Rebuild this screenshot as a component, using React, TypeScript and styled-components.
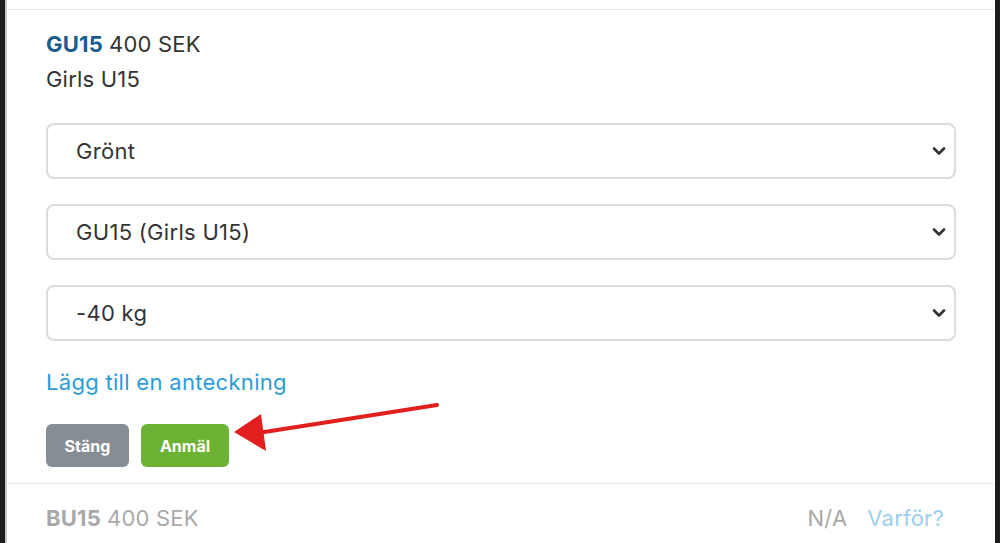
import React from "react";
import styled, { createGlobalStyle } from "styled-components";

const Global = createGlobalStyle`
  html, body { margin: 0; padding: 0; background: #1c1c1c; }
  body { font-family: "Inter", "Open Sans", "Liberation Sans", sans-serif; }
  * { box-sizing: border-box; }
`;

const Frame = styled.div`
  position: relative;
  margin-left: 5px;
  width: 990px;
  height: 543px;
  background: #fff;
  border-left: 2px solid #c8c8c8;
  overflow: hidden;
`;

const Item = styled.div<{ $muted?: boolean }>`
  margin: 0 0 0 1px;
  width: 986px;
  border-top: 1px solid #e8e8e8;
  padding: ${(p) => (p.$muted ? "17px 38px" : "17px 38px 16px 38px")};
`;

const Spacer = styled.div`
  height: 9px;
`;

const TitleLine = styled.div<{ $muted?: boolean }>`
  font-size: 22px;
  letter-spacing: 0.2px;
  line-height: 35px;
  color: ${(p) => (p.$muted ? "#a9a9a9" : "#333")};
  display: flex;
  align-items: center;
`;

const Code = styled.span<{ $muted?: boolean }>`
  font-weight: 700;
  color: ${(p) => (p.$muted ? "#a9a9a9" : "#1b5d8c")};
  margin-right: 6px;
`;

const Sub = styled.div`
  font-size: 22px;
  letter-spacing: 0.2px;
  line-height: 35px;
  color: #333;
`;

const Fields = styled.div`
  display: flex;
  flex-direction: column;
  gap: 25px;
  margin-top: 26px;
`;

const SelectBox = styled.div`
  position: relative;
  height: 56px;
  border: 2px solid #dcdcdc;
  border-radius: 8px;
  display: flex;
  align-items: center;
  padding-left: 28px;
  font-size: 22px;
  letter-spacing: 0.3px;
  color: #333;
`;

const Chevron = styled.svg`
  position: absolute;
  right: 8px;
  top: 50%;
  margin-top: -6px;
`;

const Link = styled.a`
  display: block;
  margin-top: 26px;
  font-size: 22px;
  letter-spacing: 0.3px;
  line-height: 30px;
  color: #2a9cd8;
  text-decoration: none;
`;

const Buttons = styled.div`
  display: flex;
  gap: 12px;
  margin-top: 27px;
`;

const Button = styled.button<{ $variant: "gray" | "green" }>`
  height: 43px;
  width: ${(p) => (p.$variant === "gray" ? "83px" : "88px")};
  padding: 0;
  border: none;
  border-radius: 6px;
  font-family: inherit;
  font-size: 16px;
  font-weight: 700;
  color: #fff;
  background: ${(p) => (p.$variant === "gray" ? "#878e93" : "#6cb235")};
`;

const Row = styled.div`
  display: flex;
  align-items: center;
  justify-content: space-between;
`;

const Right = styled.div`
  display: flex;
  gap: 20px;
  font-size: 22px;
  letter-spacing: 0.2px;
  line-height: 35px;
  padding-right: 12px;
`;

const NA = styled.span`
  color: #a9a9a9;
`;

const Why = styled.span`
  color: #9ccfee;
`;

const Arrow = styled.svg`
  position: absolute;
  left: -7px;
  top: 0;
  pointer-events: none;
`;

const ChevronIcon = () => (
  <Chevron width="14" height="12" viewBox="0 0 14 12">
    <path d="M2 3.5 L7 8.5 L12 3.5" fill="none" stroke="#333" strokeWidth="2.6" strokeLinecap="round" strokeLinejoin="round" />
  </Chevron>
);

export default function App() {
  return (
    <>
      <Global />
      <Frame>
        <Spacer />
        <Item>
          <TitleLine>
            <Code>GU15</Code>400 SEK
          </TitleLine>
          <Sub>Girls U15</Sub>
          <Fields>
            <SelectBox>
              Grönt
              <ChevronIcon />
            </SelectBox>
            <SelectBox>
              GU15 (Girls U15)
              <ChevronIcon />
            </SelectBox>
            <SelectBox>
              -40 kg
              <ChevronIcon />
            </SelectBox>
          </Fields>
          <Link href="#">Lägg till en anteckning</Link>
          <Buttons>
            <Button $variant="gray">Stäng</Button>
            <Button $variant="green">Anmäl</Button>
          </Buttons>
        </Item>
        <Item $muted>
          <Row>
            <TitleLine $muted>
              <Code $muted>BU15</Code>400 SEK
            </TitleLine>
            <Right>
              <NA>N/A</NA>
              <Why>Varför?</Why>
            </Right>
          </Row>
        </Item>
        <Arrow width="1000" height="543" viewBox="0 0 1000 543">
          <line x1="437" y1="405" x2="258" y2="433" stroke="#e11f1f" strokeWidth="4" strokeLinecap="round" />
          <polygon points="234,432 261,414 266,451" fill="#e11f1f" />
        </Arrow>
      </Frame>
    </>
  );
}
